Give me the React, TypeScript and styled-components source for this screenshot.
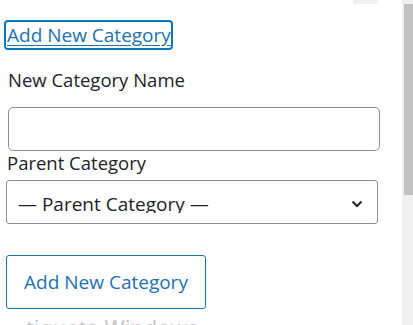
import React from 'react'
import styled, { createGlobalStyle } from 'styled-components'

const Global = createGlobalStyle`
  html, body {
    margin: 0;
    padding: 0;
    background: #fff;
  }
  body {
    font-family: "Open Sans", "Noto Sans", sans-serif;
    color: #1d2327;
    overflow: hidden;
  }
`

const Root = styled.div`
  display: flex;
  width: 413px;
  height: 325px;
  overflow: hidden;
`

const Main = styled.div`
  flex: 1;
  display: flex;
  flex-direction: column;
  align-items: flex-start;
  padding: 0 0 0 6px;

  & > * {
    flex-shrink: 0;
  }
`

const Stub = styled.div`
  align-self: flex-end;
  width: 25px;
  height: 4px;
  margin-right: 24px;
  background: #f0f0f0;
`

const ToggleLink = styled.a`
  display: inline-block;
  margin: 16px 0 0 -2px;
  padding: 1px 0 1px 1px;
  border: 2px solid #0a78be;
  border-radius: 4px;
  color: #2271b1;
  font-size: 19px;
  line-height: 24px;
  text-decoration: underline;
  text-underline-offset: 3px;
`

const Label = styled.label<{ $top: number; $left?: number }>`
  display: block;
  margin-top: ${p => p.$top}px;
  margin-left: ${p => p.$left ?? 2}px;
  font-size: 18.5px;
  line-height: 24px;
  color: #1d2327;
`

const TextInput = styled.div`
  box-sizing: border-box;
  width: 372px;
  height: 44px;
  margin: 15px 0 0 2px;
  border: 1px solid #8c8f94;
  border-radius: 5px;
  background: #fff;
`

const Select = styled.div`
  box-sizing: border-box;
  display: flex;
  align-items: flex-start;
  width: 372px;
  height: 44px;
  margin-top: 5px;
  padding: 10px 14px 0 11px;
  border: 1px solid #8c8f94;
  border-radius: 3px;
`

const SelectText = styled.span`
  flex: 1;
  height: 22px;
  overflow: hidden;
  font-size: 19px;
  line-height: 26px;
  color: #1d2327;
  white-space: nowrap;
`

const Chevron = styled.svg`
  margin-top: 9px;
`

const Button = styled.button`
  box-sizing: border-box;
  width: 200px;
  height: 54px;
  margin-top: 31px;
  border: 1px solid #2271b1;
  border-radius: 3px;
  background: #fff;
  color: #2271b1;
  font-family: inherit;
  font-size: 19px;
`

const Faded = styled.div`
  margin: 5px 0 0 20px;
  font-size: 22px;
  line-height: 26px;
  color: #c3c4c7;
  white-space: nowrap;
`

const Track = styled.div`
  width: 11px;
  background: #f0f0f0;
  padding-top: 4px;
  display: flex;
  justify-content: flex-end;
  align-items: flex-start;
`

const Thumb = styled.div`
  width: 9px;
  height: 191px;
  background: #c1c1c1;
`

export default function App() {
  return (
    <Root>
      <Global />
      <Main>
        <Stub />
        <ToggleLink href="#">Add New Category</ToggleLink>
        <Label $top={18}>New Category Name</Label>
        <TextInput />
        <Label $top={0} $left={1}>Parent Category</Label>
        <Select>
          <SelectText>— Parent Category —</SelectText>
          <Chevron width="12" height="8" viewBox="0 0 12 8">
            <polyline points="1.5,1.5 6,6 10.5,1.5" fill="none" stroke="#1d2327" strokeWidth="2" />
          </Chevron>
        </Select>
        <Button>Add New Category</Button>
        <Faded>tiqueta Windows</Faded>
      </Main>
      <Track>
        <Thumb />
      </Track>
    </Root>
  )
}
